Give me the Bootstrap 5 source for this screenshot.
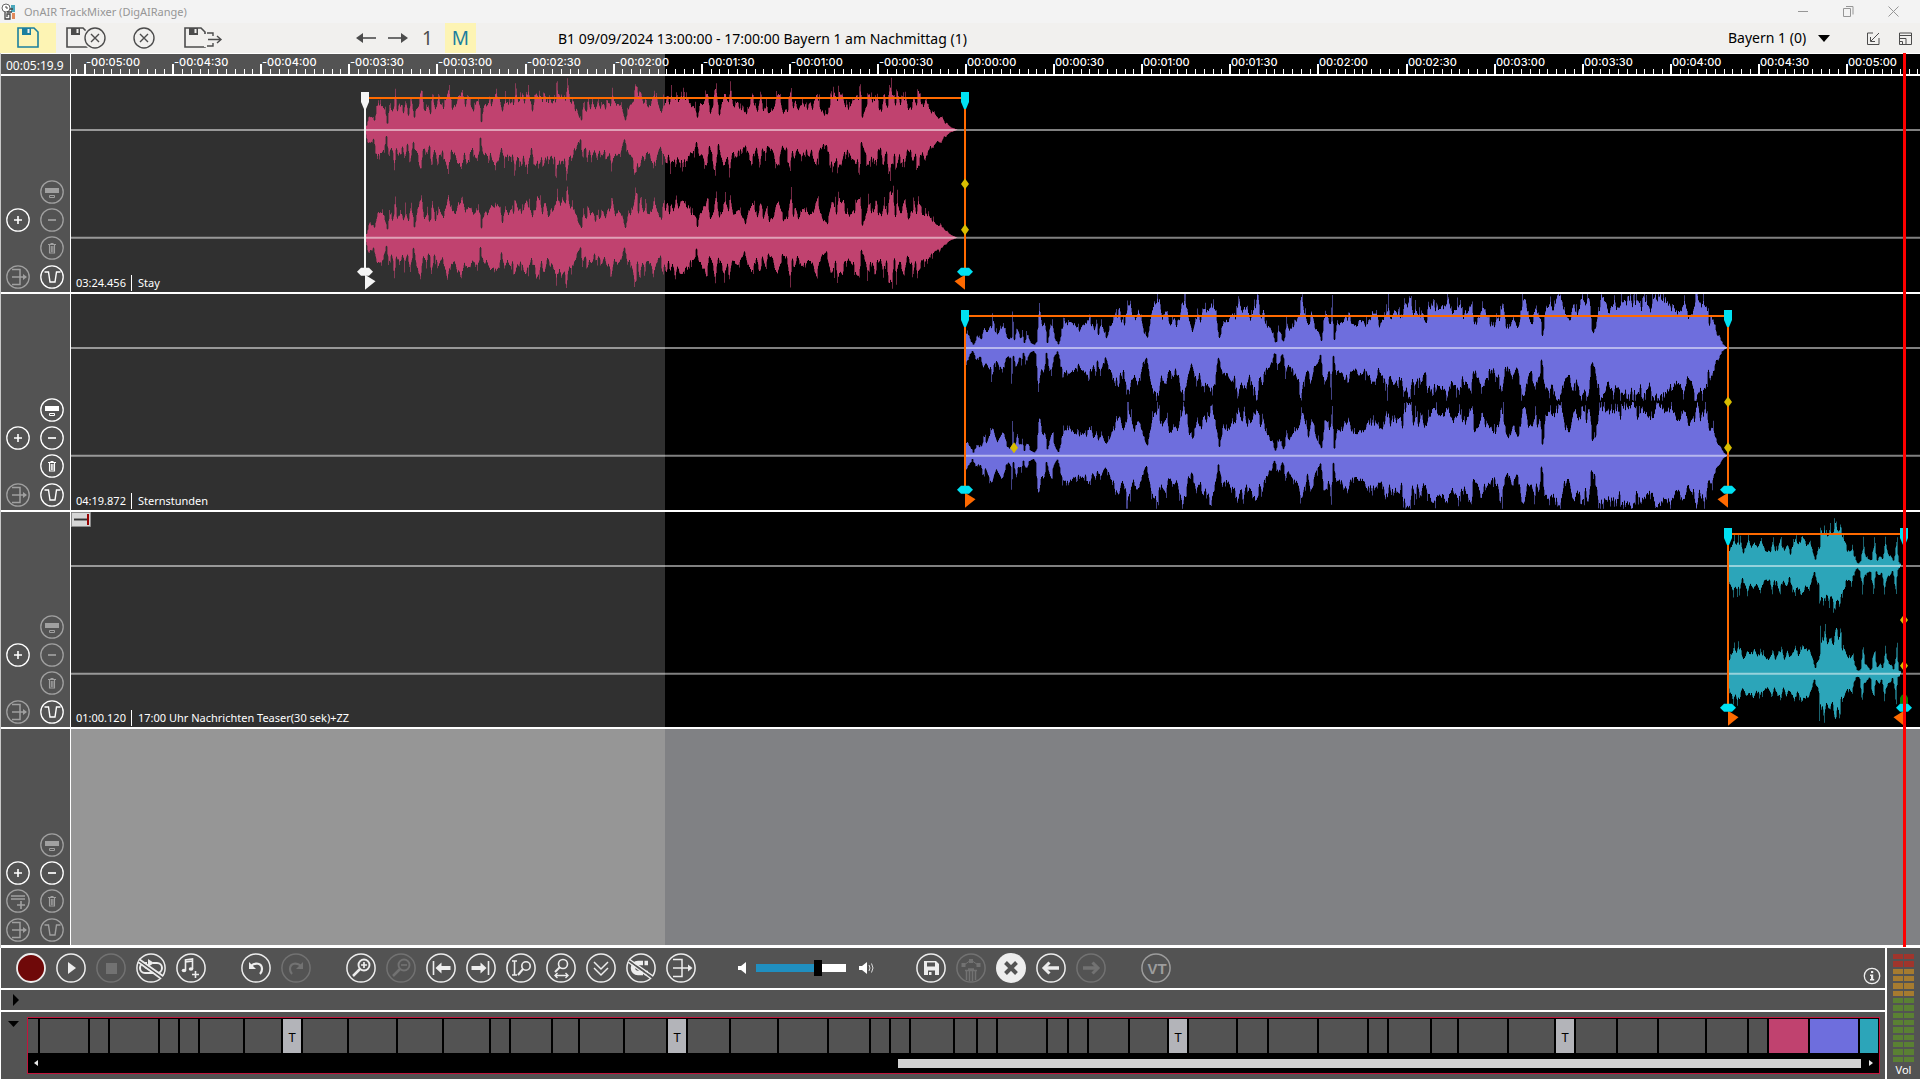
<!DOCTYPE html>
<html lang="de">
<head>
<meta charset="utf-8">
<meta name="viewport" content="width=device-width, initial-scale=1">
<title>OnAIR TrackMixer (DigAIRange)</title>
<link rel="stylesheet" href="https://cdn.jsdelivr.net/npm/bootstrap@5.3.0/dist/css/bootstrap.min.css">
<style>
:root{--panel:#535353;--past:32.13%;--on:#ededed;--off:#727272}
body{font-family:"Noto Sans","Open Sans",sans-serif;font-size:12px;line-height:16px;background:#fff;color:#000}
svg{display:block}
button{background:none;border:0;padding:0;color:inherit;flex:none}
.ln{fill:none;stroke:currentColor}
.window-bar{height:23px;background:#f3f3f3;color:#969696}
.window-bar h1{font-size:11px;line-height:16px;font-weight:400;margin:0}
.win-ctl{width:45px;height:18px}
.main-bar{height:30px;background:#f1f0ee;color:#4c4c4c;position:relative}
.hot{background:#fdf4b4;color:#1b7f9e}
.num{font-size:19px;line-height:28px}
.show-title{font-size:14px;line-height:20px;color:#000;left:558px;top:6px}
.gap-s{margin-left:12px}
.gap-m{margin-left:14px}
.chan{font-family:inherit;font-size:14px;line-height:20px;height:24px;appearance:none;border:0;background:none;padding:0;color:#000;width:90px}
.editor{border-left:1px solid #c8c8c8;min-height:0}
.side{width:70px;background:var(--panel);border-right:1px solid #fff;color:#fff;flex:none}
.ruler-row{height:23px;border-top:1px solid #fff;border-bottom:2px solid #fff;flex:none}
.clock{line-height:23px;padding-left:5px}
.ruler{background:linear-gradient(90deg,var(--panel) var(--past),#000 0)}
.ruler span{position:absolute;top:2px;margin-left:1px;color:#fff;font:500 11px/12px Inter,sans-serif;white-space:nowrap}
.ruler svg,.lane svg.wave{position:absolute;inset:0;width:100%;height:100%}
.track{flex:1 1 0;min-height:0;border-bottom:2px solid #fff}
.track:last-child{border-bottom-width:3px}
.lane{background:linear-gradient(90deg,#303030 var(--past),#000 0)}
.lane.free{background:linear-gradient(90deg,#969696 var(--past),#808184 0)}
.lane-tag{position:absolute;left:5px;bottom:1px;color:#fff;font-size:11px;line-height:16px}
.lane-tag span+span{border-left:1px solid #fff;padding-left:6px;margin-left:5px}
.flagbox{position:absolute;left:0;top:0;width:20px;height:15px}
.side-grid{display:grid;grid-template-columns:24px 24px;column-gap:10px;row-gap:4px;padding:0 0 3px 5px;align-content:end;height:100%}
.side-grid button{width:24px;height:24px}
.side-grid button:disabled{color:#a0a0a0}
.side-grid .c2{grid-column:2}
.side-grid .low{margin-top:1px}
.playhead{position:absolute;top:0;bottom:1px;width:3px;background:#f00;left:99.08%;z-index:5}
.timeline{position:relative;min-height:0}
.head-layer{position:absolute;left:70px;right:0;top:0;bottom:0;pointer-events:none}
.deck{border-left:1px solid #fff;border-bottom:1px solid #fff;flex:none}
.transport{height:40px;background:var(--panel);color:var(--on);padding-left:15px;gap:10px}
.transport button{width:30px;height:30px}
.transport button:disabled{color:var(--off)}
.transport .vt:disabled{color:#9d9d9d}
.vt text{font:700 15px "Liberation Sans",sans-serif}
.g1{margin-left:25px}
.vol{appearance:none;width:90px;height:16px;background:linear-gradient(90deg,#208fc0 65%,#fff 0) center/100% 8px no-repeat;margin:0}
.vol::-webkit-slider-thumb{appearance:none;width:8px;height:16px;background:#000;border:0;border-radius:0}
.fold{height:20px;background:var(--panel);margin:2px 0;padding-left:12px}
.overview{height:67px;background:var(--panel);padding:5px 5px 5px 7px;gap:8px}
.strip-box{border:1px solid #c4143c;background:#000;padding-top:1px}
.strip{height:34px;gap:2px;padding-right:1px}
.strip div{background:var(--panel);min-width:0;text-align:center;color:#000;font-size:13px;line-height:36px}
.strip .talk{background:#b3b4b9}
.strip .c-stay{background:#c0426f}.strip .c-stern{background:#6e6edd}.strip .c-news{background:#2ca5b9}
.scroller{height:20px;padding:0 6px}
.scroller i{display:block;width:4px;height:6px;background:#e8e8e8}
.scroller .lf{clip-path:polygon(100% 0,0 50%,100% 100%)}
.scroller .rt{clip-path:polygon(0 0,100% 50%,0 100%)}
.rail{margin:0 8px 0 6px;height:9px}
.rail div{height:9px;background:#d3d3d3;margin-left:47%}
.meter{width:33px;margin-left:2px;background:var(--panel);color:#fff;padding-top:6px;flex:none}
.meter-name{font-size:11px;line-height:16px}
.leds{display:grid;grid-template-columns:10px 10px;column-gap:1px;row-gap:2px;justify-content:center;height:108px;grid-auto-rows:1fr}
.leds b{background:#5a8033}.leds b.r{background:#a0352c}.leds b.o{background:#a67b2f}
</style>
</head>
<body>
<svg width="0" height="0" class="position-absolute" aria-hidden="true">
<defs>
<g id="disk" fill="none" stroke="currentColor" stroke-width="1.6"><path d="M1 1h16l4 4v15H1z"/><path d="M5 1h9v7H5z" fill="currentColor" stroke="none"/><path d="M10.500 2v4h2V2z" fill="#f1f0ee" stroke="none"/></g>
<g id="xc" fill="none" stroke="currentColor" stroke-width="1.400"><circle cx="11" cy="11" r="10"/><path d="M7 7l8 8M15 7l-8 8"/></g>
<g id="ring"><circle cx="12" cy="12" r="11.200" fill="none" stroke="currentColor" stroke-width="1.300"/></g>
<g id="s-dock"><use href="#ring"/><path d="M5 8h14v5H5z" fill="currentColor"/><path d="M9.500 15.500h5v2h-5z" fill="none" stroke="currentColor"/></g>
<g id="s-plus"><use href="#ring"/><path d="M12 8v8M8 12h8" stroke="currentColor" stroke-width="1.600"/></g>
<g id="s-minus"><use href="#ring"/><path d="M8 12h8" stroke="currentColor" stroke-width="1.700"/></g>
<g id="s-bin"><use href="#ring"/><path d="M8 8.500h8M10.500 7.500h3M9.500 9v8h5V9M11.300 10v6M12.900 10v6" fill="none" stroke="currentColor" stroke-width="1.100"/></g>
<g id="s-join"><use href="#ring"/><path d="M6 4.500h8v15H6M6 12h14" fill="none" stroke="currentColor" stroke-width="1.500"/><path d="M17 9l4 3-4 3z" fill="currentColor"/></g>
<g id="s-fade"><use href="#ring"/><path d="M4.500 7h4l1.500 10h5l1.500-10h4" fill="none" stroke="currentColor" stroke-width="1.400"/></g>
<g id="s-list"><use href="#ring"/><path d="M5 7h14M5 10h14M15 12v8M11 16h8" fill="none" stroke="currentColor" stroke-width="1.600"/></g>
<g id="o"><circle cx="15" cy="15" r="14.100" fill="none" stroke="currentColor" stroke-width="1.500"/></g>
</defs>
</svg>

<div class="d-flex flex-column vh-100 overflow-hidden">
<header>
<div class="window-bar d-flex align-items-center">
<svg class="flex-shrink-0" width="16" height="18" viewBox="0 0 16 18" style="margin:0 7px 0 1px"><circle cx="5" cy="5" r="4" fill="#fff" stroke="#666"/><path d="M5 3v2h2" fill="none" stroke="#444"/><path d="M10 2h4v7h-4z" fill="#4aa8bd"/><path d="M6 9h5M4 9v7h5v-5H6v3M9 6h3" fill="none" stroke="#444" stroke-width="1.300"/><path d="M11 10h3v6h-3z" fill="#e0895b"/></svg>
<h1>OnAIR TrackMixer (DigAIRange)</h1>
<div class="ms-auto d-flex">
<button class="win-ctl" aria-label="Minimieren"><svg class="mx-auto" width="11" height="11"><path class="ln" d="M0 5.500h10"/></svg></button>
<button class="win-ctl" aria-label="Wiederherstellen"><svg class="mx-auto" width="11" height="11"><path class="ln" d="M.5 2.500h7v8h-7zM3 .5h7v8"/></svg></button>
<button class="win-ctl me-1" aria-label="Schließen"><svg class="mx-auto" width="11" height="11"><path class="ln" d="M.5.500l10 10m0-10l-10 10"/></svg></button>
</div>
</div>
<div class="main-bar d-flex align-items-center">
<button class="hot h-100 ps-3" style="width:56px" aria-label="Speichern"><svg width="24" height="22"><use href="#disk" x="1"/></svg></button>
<button style="margin-left:10px" aria-label="Speichern und schließen"><svg width="42" height="24"><use href="#disk" y="1"/><circle cx="29" cy="12" r="12" fill="#f1f0ee"/><use href="#xc" x="18" y="1"/></svg></button>
<button class="ms-4" aria-label="Schließen"><svg width="24" height="24"><use href="#xc" x="1" y="1"/></svg></button>
<button class="ms-4 ps-1" aria-label="Speichern und weitergeben"><svg width="42" height="24"><use href="#disk" y="1"/><path d="M20 8h8v13h-8z" fill="#f1f0ee"/><path class="ln" stroke-width="1.400" d="M23 7h6v3M23 20h6v-3M24 13.500h13M33 10l4 3.500-4 3.500"/></svg></button>
<div class="d-flex align-items-center h-100" style="margin-left:130px">
<button aria-label="Zurück"><svg width="20" height="12"><path class="ln" stroke-width="1.600" d="M2 6h18"/><path d="M0 6l7-5v10z" fill="currentColor"/></svg></button>
<button class="gap-s" aria-label="Vor"><svg width="20" height="12"><path class="ln" stroke-width="1.600" d="M0 6h18"/><path d="M20 6l-7-5v10z" fill="currentColor"/></svg></button>
<button class="num gap-m">1</button>
<button class="hot num h-100 gap-s" style="width:31px">M</button>
</div>
<div class="show-title position-absolute text-nowrap">B1 09/09/2024 13:00:00 - 17:00:00 Bayern 1 am Nachmittag (1)</div>
<div class="ms-auto d-flex align-items-center">
<select class="chan" aria-label="Kanal"><option>Bayern 1 (0)</option></select>
<svg width="12" height="7"><path d="M0 0h12L6 7z"/></svg>
<button aria-label="Andocken" style="margin-left:37px"><svg width="13" height="13"><path class="ln" d="M6 1H.5v11.500H12V6M12 1L4 9M3.500 5v4.500H8"/></svg></button>
<button class="ms-3 me-2" aria-label="Fensteranordnung" style="padding-left:3px"><svg width="13" height="13"><path class="ln" d="M.5 1h12v11.500H.5zM0 3.500h13M.5 6.500h6.500v6M.5 9.500h3v3"/></svg></button>
</div>
</div>
</header>

<main class="editor timeline d-flex flex-column flex-grow-1">
<div class="ruler-row d-flex">
<div class="side clock">00:05:19.9</div>
<div class="ruler position-relative flex-grow-1 overflow-hidden" id="ruler"></div>
</div>
<div class="d-flex flex-column flex-grow-1" id="tracks" style="min-height:0"></div>
<div class="head-layer"><div class="playhead"></div></div>
</main>

<footer class="deck d-flex">
<div class="flex-grow-1" style="min-width:0">
<div class="transport d-flex align-items-center">
<button aria-label="Aufnahme"><svg width="30" height="30"><circle cx="15" cy="15" r="14" fill="#6f0909" stroke="#eee" stroke-width="1.800"/></svg></button>
<button aria-label="Wiedergabe"><svg width="30" height="30"><use href="#o"/><path d="M12 9v12l8-6z" fill="currentColor"/></svg></button>
<button disabled aria-label="Stopp"><svg width="30" height="30"><use href="#o"/><path d="M10 10h11v11H10z" fill="currentColor"/></svg></button>
<button aria-label="Schleife aus"><svg width="30" height="30"><use href="#o"/><path class="ln" stroke-width="2" d="M11 10H9a4.500 4.500 0 0 0 0 10h12a4.500 4.500 0 0 0 0-10h-4M9 14l12 6"/><path d="M12 6l6 4-6 4z" fill="currentColor"/><path d="M3 8l24 17" stroke="#535353" stroke-width="2"/><path class="ln" stroke-width="1.600" d="M3 6l24 17M2 9l22 16"/></svg></button>
<button aria-label="Musik hinzufügen"><svg width="30" height="30"><use href="#o"/><path class="ln" stroke-width="1.600" d="M9.500 17V7l7-1v10M9.500 9l7-1M19.500 18v7M16 21.500h7"/><ellipse cx="8" cy="17.500" rx="2.300" ry="1.800" fill="currentColor"/><ellipse cx="15" cy="16" rx="2.300" ry="1.800" fill="currentColor"/></svg></button>
<button class="g1" aria-label="Rückgängig"><svg width="30" height="30"><use href="#o"/><path class="ln" stroke-width="2.200" d="M10 13c4-4 11-3 11 3 0 2-1 4-2 5"/><path d="M8 9v7h7z" fill="currentColor"/></svg></button>
<button disabled aria-label="Wiederholen"><svg width="30" height="30"><use href="#o"/><path class="ln" stroke-width="2.200" d="M20 13c-4-4-11-3-11 3 0 2 1 4 2 5"/><path d="M22 9v7h-7z" fill="currentColor"/></svg></button>
<button class="g1" aria-label="Vergrößern"><svg width="30" height="30"><use href="#o"/><circle class="ln" cx="18" cy="12" r="5.500" stroke-width="1.900"/><path class="ln" stroke-width="1.700" d="M18 9v6M15 12h6"/><path class="ln" stroke-width="2.500" d="M14 16l-7 7"/></svg></button>
<button disabled aria-label="Verkleinern"><svg width="30" height="30"><use href="#o"/><circle class="ln" cx="18" cy="12" r="5.500" stroke-width="1.900"/><path class="ln" stroke-width="1.700" d="M15 12h6"/><path class="ln" stroke-width="2.500" d="M14 16l-7 7"/></svg></button>
<button aria-label="Zum Anfang"><svg width="30" height="30"><use href="#o"/><path class="ln" stroke-width="1.600" d="M7.500 8v14"/><path d="M9.500 15l6-5.500v3.500h9v4h-9v3.500z" fill="currentColor"/></svg></button>
<button aria-label="Zum Ende"><svg width="30" height="30"><use href="#o"/><path class="ln" stroke-width="1.600" d="M22.500 8v14"/><path d="M20.500 15l-6-5.500v3.500h-9v4h9v3.500z" fill="currentColor"/></svg></button>
<button aria-label="Höhe anpassen"><svg width="30" height="30"><use href="#o"/><path class="ln" stroke-width="1.500" d="M6 8h5M6 22h5M8.500 8v14"/><circle class="ln" cx="20" cy="13" r="4.200" stroke-width="1.600"/><path class="ln" stroke-width="2" d="M17 16l-5 6"/></svg></button>
<button aria-label="Breite anpassen"><svg width="30" height="30"><use href="#o"/><circle class="ln" cx="17" cy="11" r="4.500" stroke-width="1.600"/><path class="ln" stroke-width="2" d="M14 14l-5 5"/><path class="ln" stroke-width="1.400" d="M9 22.500h13M11.500 20L9 22.500l2.500 2.500M19.500 20l2.500 2.500-2.500 2.500"/></svg></button>
<button aria-label="Alle aufklappen"><svg width="30" height="30"><use href="#o"/><path class="ln" stroke-width="1.500" d="M8 9l7 7 7-7M8 15l7 7 7-7"/></svg></button>
<button aria-label="Magnet aus"><svg width="30" height="30"><use href="#o"/><path class="ln" stroke-width="4.500" d="M17 10h-5a5 5 0 0 0 0 10h5"/><path d="M18.500 7.700h3.500v4.500h-3.500zM18.500 17.700h3.500v4.500h-3.500z" fill="currentColor"/><path d="M3 8l24 17" stroke="#535353" stroke-width="2"/><path class="ln" stroke-width="1.500" d="M3 6l24 17M2 9l22 16"/></svg></button>
<button aria-label="Zusammenführen"><svg width="30" height="30"><use href="#o"/><path class="ln" stroke-width="1.500" d="M7 6.500h9v17H7M7 15h18"/><path d="M22 11.500l4.500 3.500-4.500 3.500z" fill="currentColor"/></svg></button>
<div class="d-flex align-items-center" style="margin-left:32px">
<svg width="9" height="12"><path d="M0 4h3l5-4v12L3 8H0z" fill="#fff"/></svg>
<input class="vol" type="range" min="0" max="100" value="71" aria-label="Lautstärke" style="margin:0 9px">
<svg width="19" height="14"><path d="M4 5h3l5-4v12L7 9H4z" fill="#fff"/><path d="M14 4q2 3 0 6M16.500 2.500q3 4.500 0 9" fill="none" stroke="#ddd"/></svg>
</div>
<button style="margin-left:32px" aria-label="Mix speichern"><svg width="30" height="30"><use href="#o"/><path d="M8 8h12l3 3v11H8z" fill="currentColor"/><path d="M11 9.500h8v4h-8zM12 17.500h7V22h-7z" fill="#535353"/><path d="M13 19h2.500v3H13z" fill="currentColor"/></svg></button>
<button disabled aria-label="Hüllkurve löschen"><svg width="30" height="30"><use href="#o"/><path d="M5.500 10h4v4h-4zM13 6h4v4h-4zM20.500 10h4v4h-4z" fill="currentColor"/><path class="ln" d="M8 12l7-5 7 5"/><path class="ln" stroke-width="1.500" d="M9 17.500h12M12 16h6M10.500 18v9M13.500 18v10M16.500 18v10M19.500 18v9"/></svg></button>
<button aria-label="Abbrechen"><svg width="30" height="30"><circle cx="15" cy="15" r="15" fill="currentColor"/><path d="M9.500 9.500l11 11m0-11l-11 11" stroke="#535353" stroke-width="4"/></svg></button>
<button aria-label="Voriger Mix"><svg width="30" height="30"><use href="#o"/><path class="ln" stroke-width="3.500" d="M8 15h15"/><path class="ln" stroke-width="3" d="M13.500 9.500L8 15l5.500 5.500"/></svg></button>
<button disabled aria-label="Nächster Mix"><svg width="30" height="30"><use href="#o"/><path class="ln" stroke-width="3.500" d="M7 15h15"/><path class="ln" stroke-width="3" d="M16.500 9.500L22 15l-5.500 5.500"/></svg></button>
<button disabled class="vt g1" aria-label="Voice Track"><svg width="30" height="30"><use href="#o"/><text x="16" y="20.500" text-anchor="middle" fill="currentColor">VT</text></svg></button>
<button class="ms-auto me-1 mt-3" style="width:18px;height:18px" aria-label="Info"><svg width="18" height="18"><circle class="ln" cx="9" cy="9" r="7.700" stroke-width="1.300"/><path d="M8 4h2.200v2H8zM7 7.500h3.200V12h1v1.500H7V12h1V9H7z" fill="currentColor"/></svg></button>
</div>
<div class="fold d-flex align-items-center"><button aria-label="Bereich aufklappen"><svg width="7" height="12"><path d="M0 0l6 6-6 6z"/></svg></button></div>
<div class="overview d-flex">
<button class="align-self-start pt-1" aria-label="Übersicht zuklappen"><svg width="11" height="7"><path d="M0 0h11L5.500 6z"/></svg></button>
<div class="strip-box flex-grow-1" style="min-width:0">
<div class="strip d-flex" id="strip"></div>
<div class="scroller d-flex align-items-center"><i class="lf"></i><div class="rail flex-grow-1"><div></div></div><i class="rt"></i></div>
</div>
</div>
</div>
<div class="meter text-center"><div class="leds" id="leds"></div><div class="meter-name">Vol</div></div>
</footer>
</div>

<script src="https://cdn.jsdelivr.net/npm/bootstrap@5.3.0/dist/js/bootstrap.bundle.min.js"></script>
<script>
const W = 1849, H = 216, ZERO = 895, STEP = 88.1;

// time ruler: a major tick every 30 s, a minor one every 3 s
(() => {
  let d = '', D = '', labels = '';
  for (let k = -101; k <= 108; k++) {
    const x = Math.round(ZERO + k * STEP / 10);
    if (k % 10) { d += `M${x} 15h1v5h-1z`; continue; }
    D += `M${x - 1} 10h2v10h-2z`;
    const s = Math.abs(k) * 3, p = n => String(n).padStart(2, '0');
    labels += `<span style="left:${(x / W * 100).toFixed(3)}%">${k < 0 ? '-' : ''}00:${p(Math.floor(s / 60))}:${p(s % 60)}</span>`;
  }
  document.getElementById('ruler').innerHTML =
    `<svg viewBox="0 0 ${W} 20" preserveAspectRatio="none" shape-rendering="crispEdges"><path fill="#fff" d="${d}${D}"/></svg>${labels}`;
})();

// peak data: position, level pairs
const stay = '366,5 368,13 373,13 374,10 377,25 382,25 385,20 387,8 389,27 392,18 393,23 395,43 397,20 401,25 403,18 405,30 408,18 411,35 414,10 417,28 421,42 424,20 427,27 430,17 432,43 435,20 438,30 443,22 448,42 452,22 455,25 458,35 462,40 465,28 470,32 473,25 477,30 480,23 481,10 484,27 487,25 490,33 493,30 495,35 499,33 502,18 505,32 508,25 511,30 513,25 515,40 518,30 522,33 527,38 529,38 532,20 535,35 539,40 542,30 544,38 547,27 550,30 553,28 557,43 560,33 562,43 565,30 567,50 570,30 572,33 575,25 578,17 581,10 583,30 585,20 588,32 590,22 592,28 595,20 597,30 600,22 602,33 605,20 607,30 610,25 612,42 615,23 618,28 622,22 625,10 627,23 630,27 633,28 635,50 638,30 640,40 643,27 645,32 648,23 651,28 654,40 657,27 661,18 663,35 665,28 667,43 669,26 671,37 673,27 676,45 678,30 681,38 685,33 688,32 691,25 695,23 697,12 699,25 703,28 707,40 710,20 713,27 716,47 719,18 722,30 725,38 728,27 730,47 733,20 736,28 740,27 745,15 748,27 752,38 757,20 761,37 763,20 766,32 769,17 773,22 776,35 779,35 783,17 787,23 791,43 793,27 795,30 798,20 802,28 805,32 809,22 813,27 817,40 821,23 823,17 827,17 830,33 834,38 837,28 838,40 842,37 845,25 850,25 855,32 860,45 862,13 866,25 868,37 872,30 876,40 880,20 884,35 887,23 889,45 893,43 895,27 897,40 900,25 903,37 905,37 908,22 912,28 914,40 916,25 918,42 922,23 926,32 928,22 932,20 935,15 938,12 942,13 945,7 947,7 950,3 955,1 958,0';
const stern = '30,55 38,30 45,10 52,40 60,25 66,60 72,45 83,90 92,40 104,75 112,30 120,25 122,135 125,20 131,70 138,25 141,55 145,15 150,50 158,15 165,10 169,20 172,100 176,120 180,70 187,80 190,15 196,60 200,75 206,25 212,10 222,80 230,75 238,80 245,70 255,60 268,80 275,95 282,55 286,75 290,50 295,75 305,35 318,80 325,115 332,120 340,75 347,145 354,125 360,75 368,115 378,65 386,30 395,115 402,130 409,155 415,90 424,120 430,65 438,95 445,80 453,130 462,158 468,80 475,50 484,115 490,80 495,130 502,110 511,135 520,110 527,30 535,85 545,80 550,100 560,110 566,135 572,105 577,130 585,105 594,115 604,158 608,85 614,120 618,70 627,60 634,35 638,10 642,60 648,40 654,15 658,85 665,55 673,70 680,90 688,155 696,100 703,65 708,120 716,65 722,50 728,20 732,110 738,110 744,70 749,160 752,15 758,90 765,75 772,90 780,115 786,80 795,65 803,85 812,75 820,90 829,120 840,80 848,85 858,158 862,90 868,130 875,105 880,125 886,100 890,161 903,161 908,90 912,130 918,100 925,125 930,75 938,120 947,145 958,120 968,130 976,150 985,105 995,130 1003,120 1010,100 1023,150 1028,80 1035,90 1045,125 1055,90 1065,80 1075,95 1083,145 1090,60 1097,65 1103,100 1112,55 1118,100 1122,158 1128,145 1133,90 1140,90 1148,130 1153,100 1158,90 1161,20 1165,120 1175,140 1182,110 1190,161 1197,155 1205,90 1215,90 1222,150 1232,110 1238,155 1246,130 1253,155 1259,40 1266,80 1272,140 1280,150 1290,125 1300,140 1310,130 1320,150 1330,155 1342,161 1350,130 1357,155 1365,130 1372,115 1377,150 1385,155 1395,150 1403,130 1412,150 1422,115 1430,105 1440,145 1447,90 1455,110 1464,158 1472,130 1480,145 1488,80 1495,90 1502,40 1510,30 1516,10 1522,2';
const news = '147,55 155,65 163,85 167,60 173,85 182,75 188,45 197,60 205,80 212,55 221,75 230,55 240,75 246,70 255,45 268,45 278,80 285,45 295,70 303,85 312,45 320,70 330,45 345,85 355,55 367,90 378,65 388,75 398,45 405,18 411,45 417,55 420,140 427,90 434,138 442,90 448,115 455,90 462,125 470,140 476,100 481,140 486,90 495,70 505,45 518,55 525,25 532,8 540,15 549,85 555,30 565,20 572,12 582,85 590,20 600,30 607,20 615,85 622,40 632,30 640,15 651,90 655,15 662,3';
const parse = (s, fx, ky) => s.split(' ').map(p => p.split(',').map(Number)).map(([x, y]) => [fx(x), y / ky]);
const tracks = [
  { name: 'Stay', len: '03:24.456', color: '#c0426f', pts: parse(stay, x => x - 71, 1), from: 294, to: 894, first: true, seed: 7, on: ['plus', 'fade'], dots: [[894, 108], [894, 154]] },
  { name: 'Sternstunden', len: '04:19.872', color: '#6e6edd', pts: parse(stern, x => 879 + x / 1.96, 3), from: 894, to: 1657, seed: 21, on: ['dock', 'plus', 'minus', 'bin', 'fade'], dots: [[1657, 108], [1657, 154], [943, 154]] },
  { name: '17:00 Uhr Nachrichten Teaser(30 sek)+ZZ', len: '01:00.120', color: '#2ca5b9', pts: parse(news, x => 1609 + x / 3, 3), from: 1657, to: 1833, seed: 5, on: ['plus', 'fade'], flag: true, dots: [[1833, 108], [1833, 154]] },
  { free: true, on: ['plus', 'minus'] }
];

// one level per pixel column, with short transients over the body of the signal
function levels(pts, seed) {
  const out = []; let r = seed, i = 0;
  const rnd = () => (r = (r * 16807) % 2147483647) / 2147483647;
  for (let x = Math.ceil(pts[0][0]); x <= pts[pts.length - 1][0]; x++) {
    while (i < pts.length - 2 && pts[i + 1][0] < x) i++;
    const [a, ya] = pts[i], [b, yb] = pts[i + 1];
    const y = ya + (yb - ya) * (x - a) / (b - a), n = rnd(), j = rnd();
    const f = n > .86 ? 1.1 + j * .12 : n < .1 ? .74 + j * .12 : .9 + j * .14;
    out.push([x, Math.max(0, Math.min(54, y * f))]);
  }
  return out;
}
const core = l => l.map(([x, y], i) => [x, Math.min(y, (l[i - 1] || l[i])[1] * 1.1, (l[i + 1] || l[i])[1] * 1.1)]);
function shape(l, c) {
  let up = '', down = '';
  for (const [x, y] of l) {
    up += `V${(c - y).toFixed(1)}H${x + 1}`;
    down = `H${x}V${(c + y * .98).toFixed(1)}` + down;
  }
  return `M${l[0][0]} ${c}${up}V${c}${down}Z`;
}
function clip(t) {
  let s = '';
  [54, 162].forEach((c, n) => {
    const l = levels(t.pts, t.seed + n * 991);
    s += `<path d="${shape(l, c)}" fill="${t.color}" opacity=".6"/><path d="${shape(core(l), c)}" fill="${t.color}"/>`;
  });
  return s;
}
function edge(x, end, white) {
  const line = white ? '#f5f5f5' : '#ff6a00', cap = white ? '#f5f5f5' : '#00e1f2', s = end ? -1 : 1;
  return `<path d="M${x - 1} 30h2v164h-2z" fill="${line}"/>
    <path d="M${x - 4} 16h8v10l-3 7h-2l-3-7z" fill="${cap}"/>
    <path d="M${x} 199l${s * 10.500} 6.500L${x} 214z" fill="${line}"/>
    <path d="M${x - 8} 196l4-4h8l4 4-4 4h-8z" fill="${cap}"/>`;
}
function lane(t) {
  if (t.free) return '';
  const mid = `<path d="M0 53h${W}v2H0zM0 161h${W}v2H0z" fill="#fff" opacity=".5"/>`;
  return `<svg class="wave" viewBox="0 0 ${W} ${H}" preserveAspectRatio="none">${clip(t)}${mid}
    <path d="M${t.from} 21H${t.to}v2H${t.from}z" fill="#ff6a00"/>
    ${edge(t.from, false, t.first)}${t.flag ? '<path d="M1829 192v-6l2-3h4l2 3v6z" fill="#0a7d00"/>' : ''}${edge(t.to, true)}
    ${t.dots.map(([x, y]) => `<path d="M${x} ${y - 5.500}l4 5.500-4 5.500-4-5.500z" fill="#d8bd00"/>`).join('')}</svg>
    ${t.flag ? '<svg class="flagbox"><path d="M.5.500h19v14H.5z" fill="#d6d6d6" stroke="#8b8b8b"/><path d="M3 6h14v3H3z" fill="#8b8b8b"/><path d="M3 7h14v1H3z" fill="#333"/><path d="M16 2h2v11h-2z" fill="#900"/></svg>' : ''}
    <div class="lane-tag d-flex"><span>${t.len}</span><span>${t.name}</span></div>`;
}
const names = { dock: 'Spur andocken', plus: 'Spur vergrößern', minus: 'Spur verkleinern', bin: 'Spur löschen', join: 'Verbinden', fade: 'Blende', list: 'Spur hinzufügen' };
document.getElementById('tracks').innerHTML = tracks.map(t => {
  const b = (n, c) => `<button class="${c || ''}" aria-label="${names[n]}"${t.on.includes(n) ? '' : ' disabled'}><svg width="24" height="24"><use href="#s-${n}"/></svg></button>`;
  return `<section class="track d-flex"><div class="side"><div class="side-grid">
    ${b('dock', 'c2')}${b('plus')}${b('minus')}${t.free ? b('list') : ''}${b('bin', 'c2')}${b('join', 'low')}${b('fade', 'low')}</div></div>
    <div class="lane position-relative flex-grow-1 overflow-hidden${t.free ? ' free' : ''}">${lane(t)}</div></section>`;
}).join('');

// programme overview: start of each element, with its kind
const starts = '28,40,90,110,160,180,200,245,283T,303,349,398,444,491,511,553,580,625,668T,688,731,779,829,871,891,911,955,978,998,1048,1069,1089,1130,1169T,1189,1238,1269,1319,1369,1389,1432,1459,1509,1556T,1576,1618,1659,1707,1749,1769A,1810B,1860C,1880'.split(',');
const kinds = { T: 'talk', A: 'c-stay', B: 'c-stern', C: 'c-news' };
document.getElementById('strip').innerHTML = starts.slice(0, -1).map((s, i) => {
  const k = s.slice(-1), w = parseInt(starts[i + 1]) - parseInt(s) - 2;
  return `<div class="${kinds[k] || ''}" style="flex:${w} ${w} 0">${k === 'T' ? 'T' : ''}</div>`;
}).join('');
document.getElementById('leds').innerHTML = Array.from({ length: 30 }, (_, i) => `<b class="${i < 4 ? 'r' : i < 12 ? 'o' : ''}"></b>`).join('');
</script>
</body>
</html>
